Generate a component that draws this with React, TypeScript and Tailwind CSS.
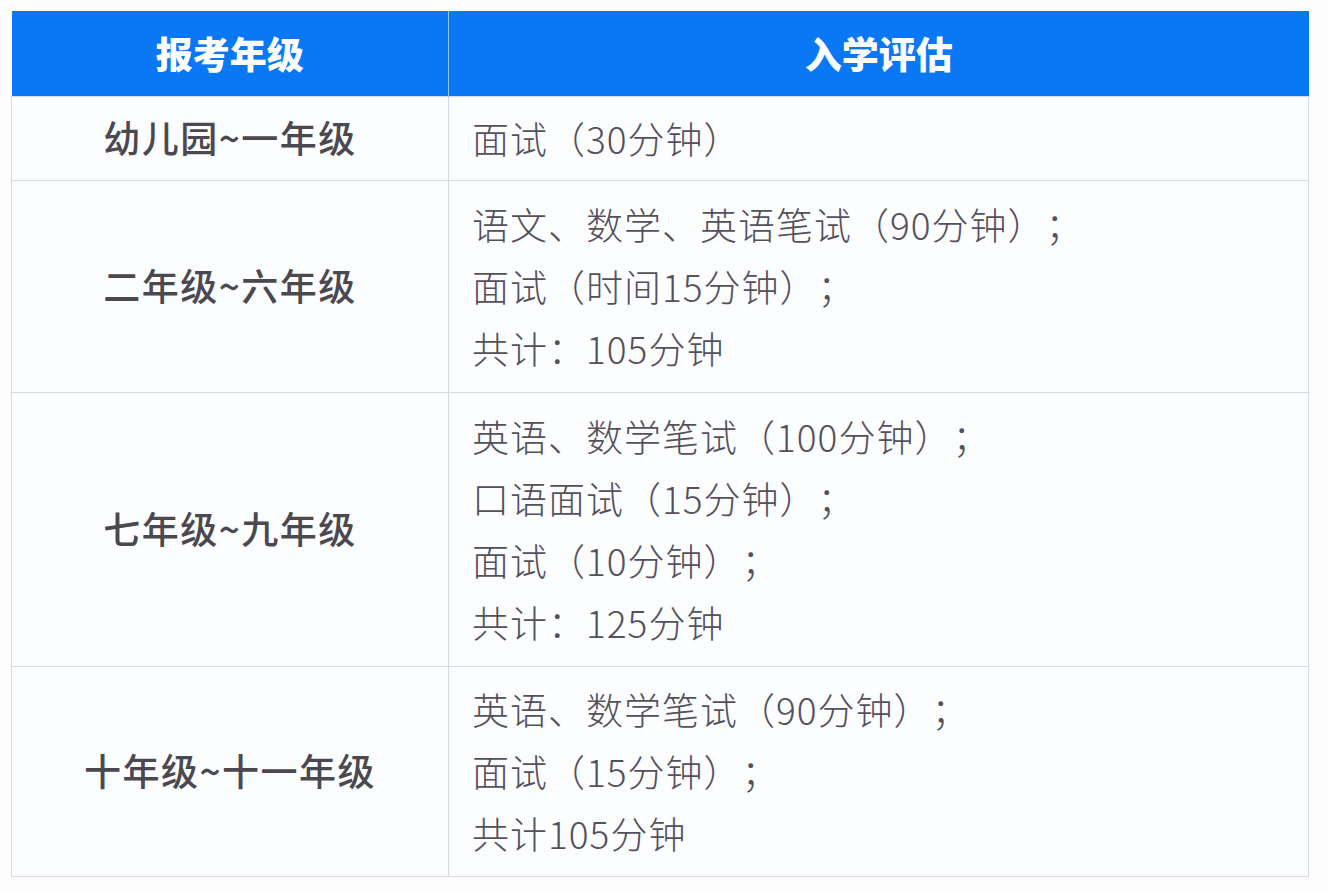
import React from "react";

const rows: { grade: string; lines: string[]; h: number }[] = [
  { grade: "幼儿园~一年级", lines: ["面试（30分钟）"], h: 84 },
  {
    grade: "二年级~六年级",
    lines: ["语文、数学、英语笔试（90分钟）；", "面试（时间15分钟）；", "共计：105分钟"],
    h: 212,
  },
  {
    grade: "七年级~九年级",
    lines: ["英语、数学笔试（100分钟）；", "口语面试（15分钟）；", "面试（10分钟）；", "共计：125分钟"],
    h: 274,
  },
  {
    grade: "十年级~十一年级",
    lines: ["英语、数学笔试（90分钟）；", "面试（15分钟）；", "共计105分钟"],
    h: 210,
  },
];

export default function App() {
  return (
    <div
      className="w-[1328px] h-[892px] bg-[#fdfdfe] pt-[11px] pl-[11px] [text-spacing-trim:space-all]"
      style={{ fontFamily: '"Noto Sans CJK SC", "Noto Sans", sans-serif' }}
    >
      <table className="w-[1298px] border-collapse table-fixed">
        <colgroup>
          <col className="w-[437px]" />
          <col />
        </colgroup>
        <thead>
          <tr className="h-[85px] bg-[#0a78f5] text-white">
            <th className="border-r border-r-[#8cc4ff] text-[37px] font-black text-center align-middle">
              报考年级
            </th>
            <th className="text-[37px] font-black text-center align-middle">入学评估</th>
          </tr>
        </thead>
        <tbody>
          {rows.map((r) => (
            <tr key={r.grade} style={{ height: r.h }} className="bg-[#fcfdff]">
              <td className="border border-[#d6d9e2] text-center align-middle text-[37px] font-medium text-[#4b4850] tracking-[1.5px]">
                {r.grade}
              </td>
              <td className="border border-[#d6d9e2] align-middle pl-[23px] text-[37px] font-light text-[#55505c] tracking-[1px]">
                {r.lines.map((l) => (
                  <div key={l} className="leading-[62px] whitespace-nowrap">
                    {l}
                  </div>
                ))}
              </td>
            </tr>
          ))}
        </tbody>
      </table>
    </div>
  );
}
